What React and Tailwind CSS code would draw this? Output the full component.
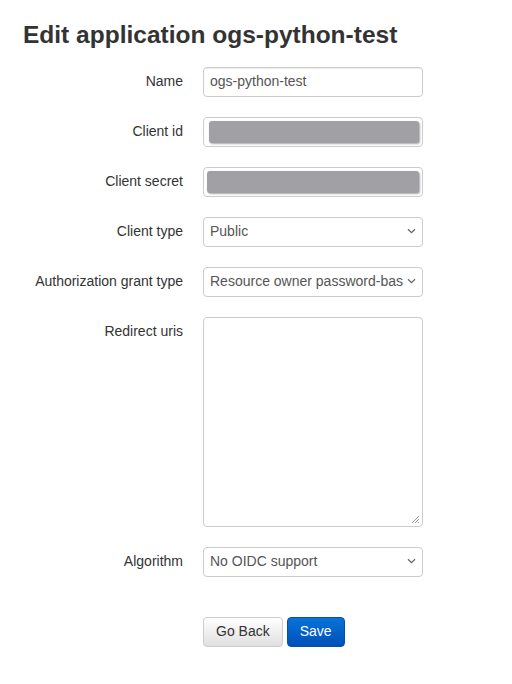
import React from "react";

const font = { fontFamily: '"Liberation Sans", Arial, sans-serif' };

function Chevron() {
  return (
    <svg width="9" height="6" viewBox="0 0 9 6" className="shrink-0">
      <path d="M1 1.2 L4.5 4.6 L8 1.2" fill="none" stroke="#666" strokeWidth="1.3" />
    </svg>
  );
}

function Row({ label, children }) {
  return (
    <div className="flex items-start mb-5">
      <div className="w-[183px] text-right text-[14px] leading-[28px] text-[#333]">{label}</div>
      <div className="ml-5 w-[220px]">{children}</div>
    </div>
  );
}

function Input({ value }) {
  return (
    <div className="h-[30px] border border-[#ccc] rounded-[4px] bg-white px-[6px] pb-[2px] flex items-center text-[14px] text-[#555] shadow-[inset_0_1px_1px_rgba(0,0,0,0.075)]">
      {value}
    </div>
  );
}

function Redacted({ offset }) {
  return (
    <div className="h-[30px] border border-[#ccc] rounded-[4px] bg-white flex items-center px-[3px]">
      <div className={`h-[22px] w-[212px] rounded-[3px] bg-[#a1a0a5] shadow-[1px_1px_2px_rgba(0,0,0,0.35)] ${offset}`}></div>
    </div>
  );
}

function Select({ value }) {
  return (
    <div className="h-[30px] border border-[#ccc] rounded-[4px] bg-white pl-[6px] pr-[6px] pb-[2px] flex items-center text-[14px] text-[#555] gap-1">
      <span className="flex-1 overflow-hidden whitespace-nowrap">{value}</span>
      <Chevron />
    </div>
  );
}

export default function App() {
  return (
    <div style={font} className="bg-white min-h-[684px] w-[512px] pl-[23px] pt-[21px]">
      <h1 className="text-[24.5px] leading-[28px] font-bold text-[#333] mb-[18px]">Edit application ogs-python-test</h1>
      <div className="-ml-[23px]">
        <Row label="Name"><Input value="ogs-python-test" /></Row>
        <Row label="Client id"><Redacted offset="ml-[2px]" /></Row>
        <Row label="Client secret"><Redacted offset="" /></Row>
        <Row label="Client type"><Select value="Public" /></Row>
        <Row label="Authorization grant type"><Select value="Resource owner password-based" /></Row>
        <Row label="Redirect uris">
          <div className="relative h-[210px] border border-[#ccc] rounded-[4px] bg-white">
            <svg width="9" height="9" viewBox="0 0 9 9" className="absolute right-[2px] bottom-[2px]">
              <path d="M8 1 L1 8 M8 4 L4 8 M8 7 L7 8" stroke="#999" strokeWidth="1" />
            </svg>
          </div>
        </Row>
        <Row label="Algorithm"><Select value="No OIDC support" /></Row>
        <div className="flex gap-1 ml-[203px] mt-[40px]">
          <button className="h-[30px] px-3 pb-[2px] border border-[#ccc] rounded-[4px] text-[14px] text-[#333] bg-gradient-to-b from-white to-[#e0e0e0]">Go Back</button>
          <button className="h-[30px] px-3 pb-[2px] border border-[#0550a8] rounded-[4px] text-[14px] text-white bg-gradient-to-b from-[#0a73d8] to-[#0050b8]">Save</button>
        </div>
      </div>
    </div>
  );
}
